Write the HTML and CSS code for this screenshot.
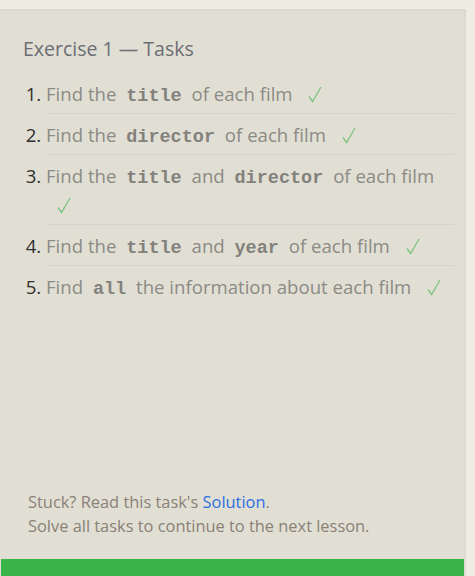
FILE: index.html
```html
<!DOCTYPE html>
<html>
<head>
<meta charset="utf-8">
<link rel="stylesheet" href="styles.css">
</head>
<body>
<div class="panel">
  <h2 class="title">Exercise 1 — Tasks</h2>
  <ol class="tasks">
    <li>Find the <code>title</code> of each film <span class="check"><svg width="14" height="17" viewBox="0 0 14 17"><path d="M1 10.5 L4.6 15.5 L13 1" fill="none" stroke="currentColor" stroke-width="1.3"/></svg></span></li>
    <li>Find the <code>director</code> of each film <span class="check"><svg width="14" height="17" viewBox="0 0 14 17"><path d="M1 10.5 L4.6 15.5 L13 1" fill="none" stroke="currentColor" stroke-width="1.3"/></svg></span></li>
    <li>Find the <code>title</code> and <code>director</code> of each film <span class="check"><svg width="14" height="17" viewBox="0 0 14 17"><path d="M1 10.5 L4.6 15.5 L13 1" fill="none" stroke="currentColor" stroke-width="1.3"/></svg></span></li>
    <li>Find the <code>title</code> and <code>year</code> of each film <span class="check"><svg width="14" height="17" viewBox="0 0 14 17"><path d="M1 10.5 L4.6 15.5 L13 1" fill="none" stroke="currentColor" stroke-width="1.3"/></svg></span></li>
    <li>Find <code>all</code> the information about each film <span class="check"><svg width="14" height="17" viewBox="0 0 14 17"><path d="M1 10.5 L4.6 15.5 L13 1" fill="none" stroke="currentColor" stroke-width="1.3"/></svg></span></li>
  </ol>
  <div class="spacer"></div>
  <div class="footer">
    <p>Stuck? Read this task's <a href="#">Solution</a>.</p>
    <p>Solve all tasks to continue to the next lesson.</p>
  </div>
  <div class="continue"></div>
</div>
</body>
</html>
```

FILE: styles.css
```css
html, body {
  margin: 0;
  padding: 0;
  background: #efece4;
  overflow: hidden;
  font-family: "Open Sans", "Noto Sans", sans-serif;
}

.panel {
  margin-top: 9px;
  width: 466px;
  height: 567px;
  box-sizing: border-box;
  background: #e1dfd4;
  border-top: 2px solid #dcdacf;
  border-right: 2px solid #dcdacf;
  display: flex;
  flex-direction: column;
}

.title {
  margin: 0;
  padding: 24px 0 0 23px;
  font-size: 19.5px;
  font-weight: 400;
  line-height: 27px;
  color: #6c6e74;
}

.tasks {
  margin: 11px 10px 0 0;
  padding: 0 0 0 46px;
  color: #8c8a85;
  font-size: 18.6px;
}

.tasks li {
  padding: 6px 0 5px;
  line-height: 29px;
  border-bottom: 1px solid #d6d4c9;
}

.tasks li:last-child {
  border-bottom: none;
}

.tasks li::marker {
  color: #2e2e2e;
}

.tasks code {
  font-family: "Liberation Mono", "DejaVu Sans Mono", monospace;
  font-weight: 700;
  font-size: 18.5px;
  line-height: 0;
  color: #83817c;
  padding: 0 5px;
}

.check {
  display: inline-block;
  margin-left: 11px;
  color: #7cc47f;
  line-height: 0;
  vertical-align: -2px;
}

.check svg {
  display: block;
}

.spacer {
  flex: 1;
}

.footer {
  padding: 0 0 21px 28px;
  font-size: 16.4px;
  line-height: 24px;
  color: #8a8177;
}

.footer p {
  margin: 0;
}

.footer a {
  color: #2f6ee2;
  text-decoration: none;
}

.continue {
  height: 17px;
  background: #3bb54a;
  margin-left: 1px;
}
```
